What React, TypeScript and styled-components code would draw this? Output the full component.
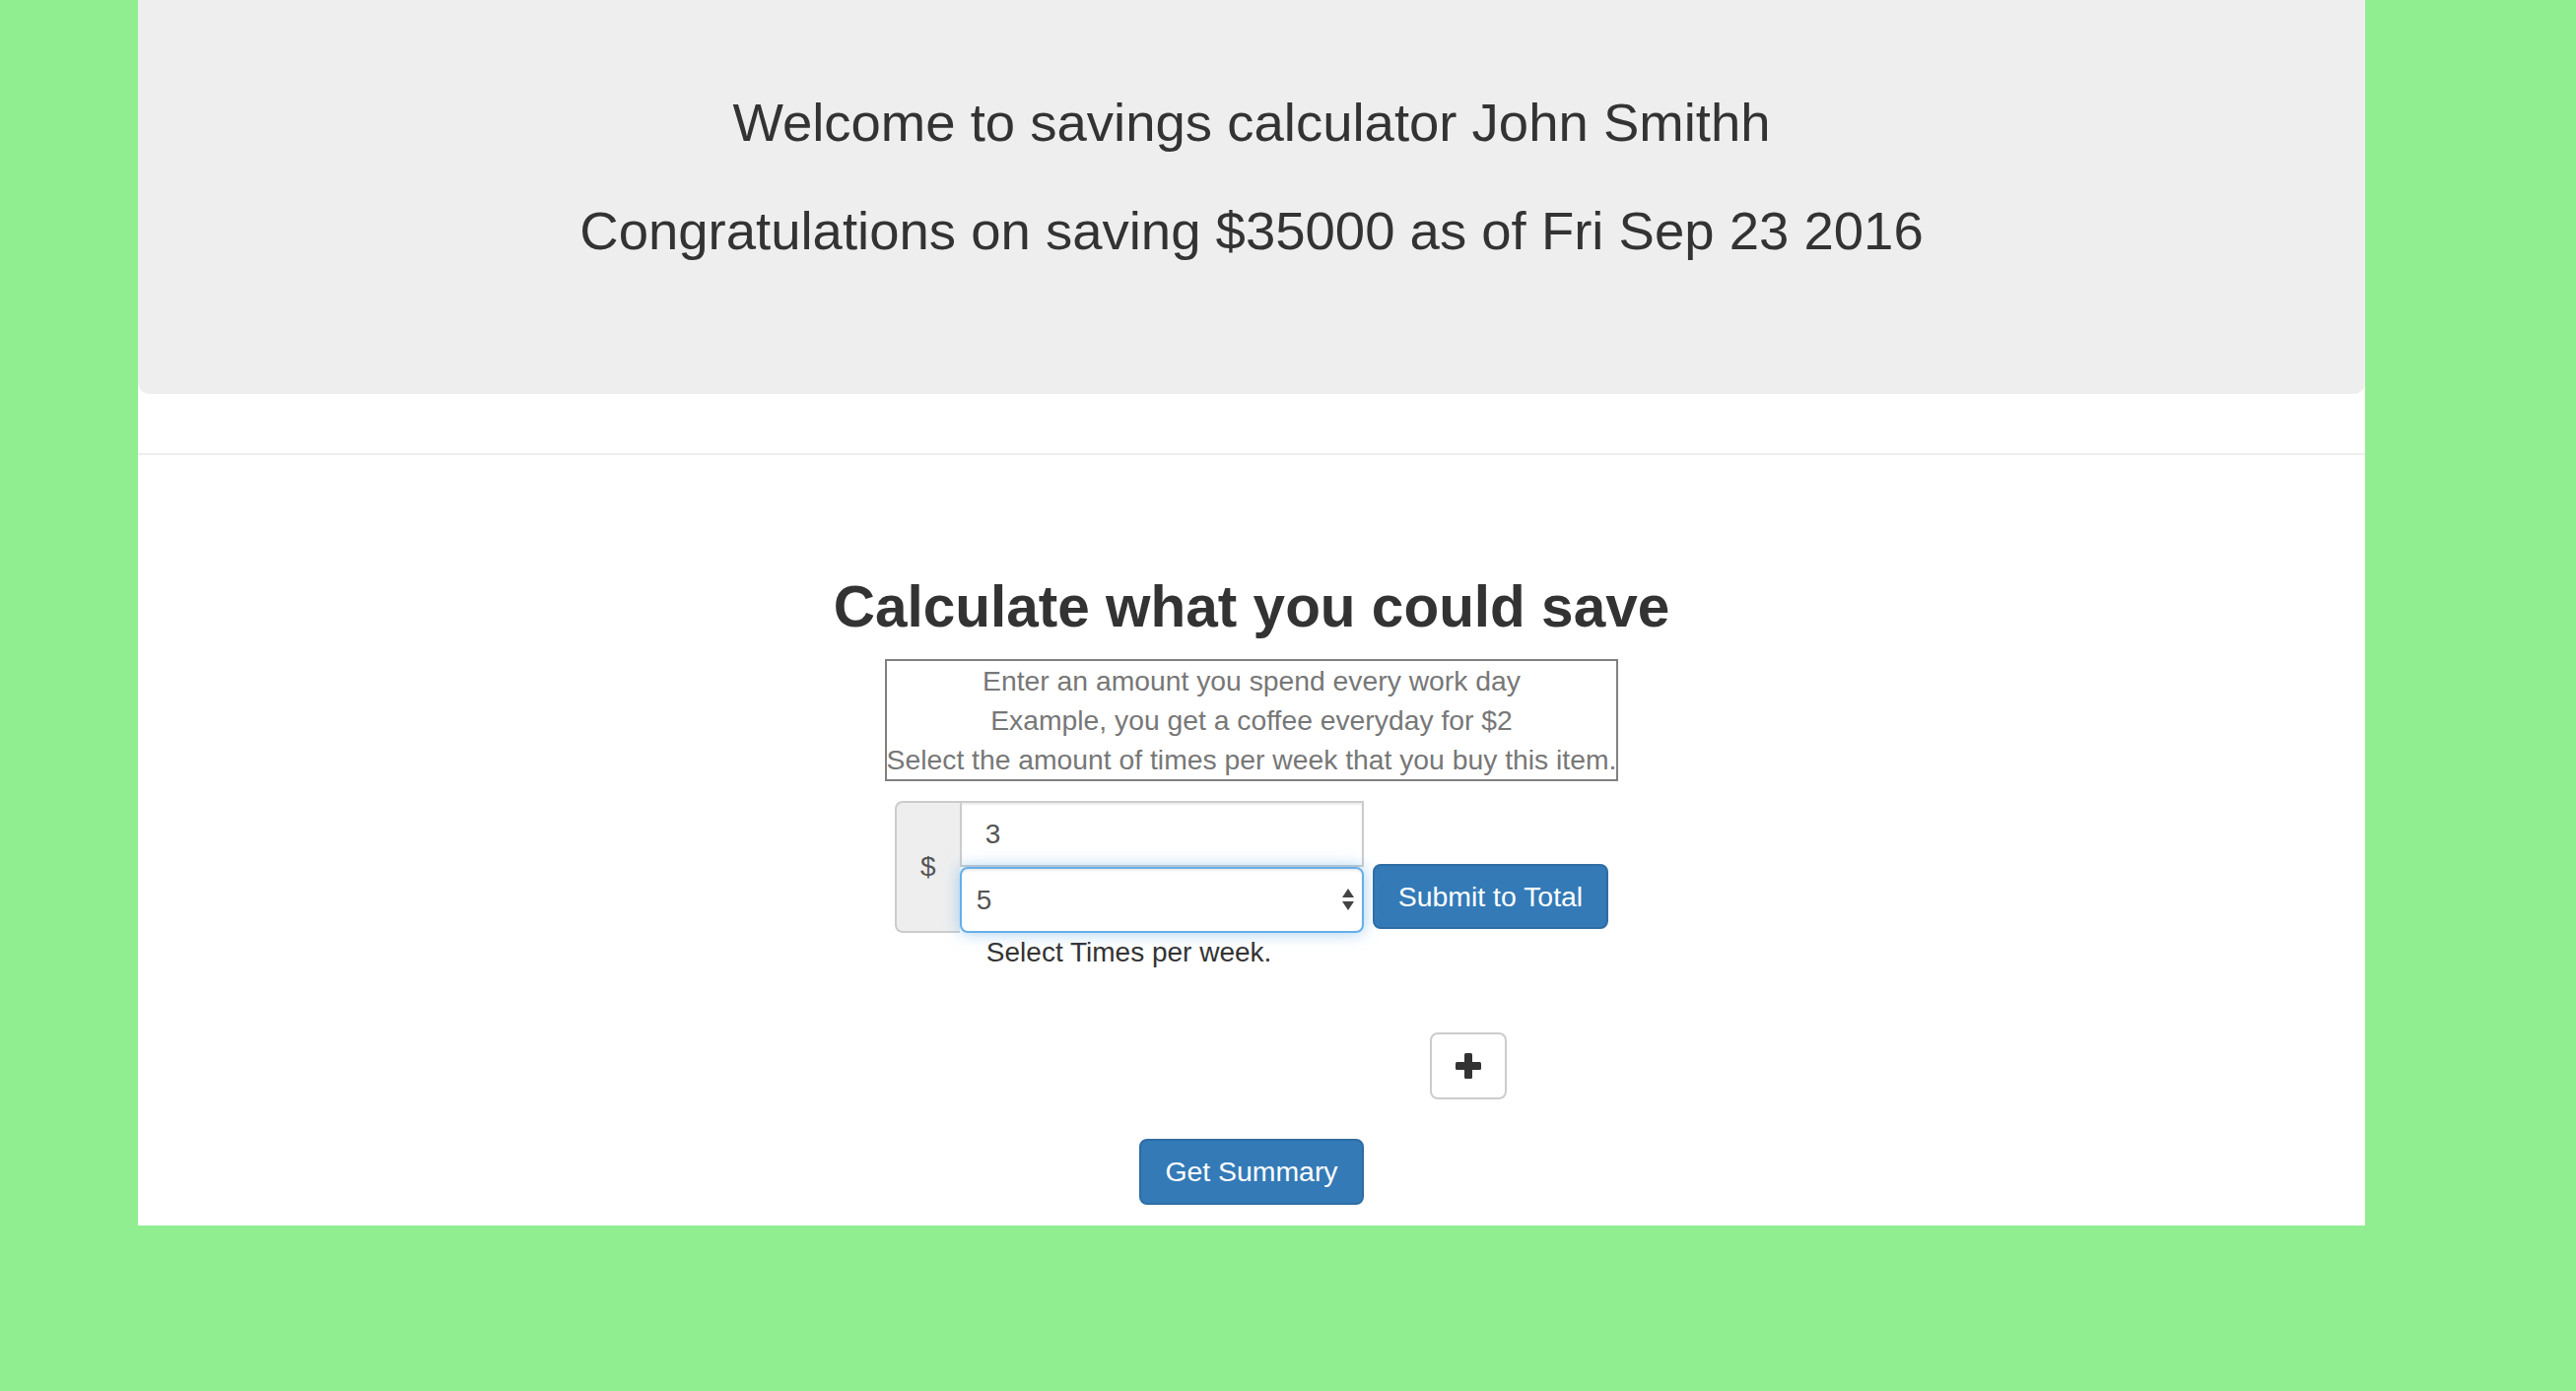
import React from "react";
import styled, { createGlobalStyle } from "styled-components";

const GlobalStyle = createGlobalStyle`
  html, body {
    margin: 0;
    padding: 0;
    background: #90ee90;
  }
  body {
    font-family: "Liberation Sans", Arial, Helvetica, sans-serif;
    color: #333;
  }
  * { box-sizing: border-box; }
`;

const Page = styled.div`
  width: 2260px;
  margin-left: 140px;
  background: #fff;
  padding-bottom: 21px;
`;

const Jumbotron = styled.header`
  height: 400px;
  background: #eee;
  border-radius: 0 0 12px 12px;
  padding-top: 70px;
  text-align: center;
`;

const JumboLine = styled.div`
  font-size: 54.5px;
  line-height: 110px;
  font-weight: 400;
  color: #333;
  white-space: nowrap;
`;

const Divider = styled.hr`
  margin: 60px 0 0;
  border: 0;
  border-top: 2px solid #eee;
  height: 0;
`;

const Main = styled.main`
  display: flex;
  flex-direction: column;
  align-items: center;
  padding-top: 121px;
`;

const Title = styled.h2`
  margin: 0;
  font-size: 58.5px;
  line-height: 66px;
  font-weight: 700;
  color: #333;
  white-space: nowrap;
`;

const InfoBox = styled.div`
  margin-top: 20px;
  border: 2px solid #808080;
  text-align: center;
  color: #777;
  font-size: 28.3px;
  line-height: 40px;
  white-space: nowrap;
`;

const FormArea = styled.div`
  margin-top: 20px;
  display: flex;
  flex-direction: column;
`;

const FormRow = styled.div`
  display: flex;
  align-items: flex-end;
  gap: 9px;
`;

const InputGroup = styled.div`
  display: flex;
  height: 134px;
`;

const Addon = styled.span`
  width: 66px;
  display: flex;
  align-items: center;
  justify-content: center;
  background: #eee;
  border: 2px solid #ccc;
  border-right: 0;
  border-radius: 8px 0 0 8px;
  font-size: 28px;
  color: #555;
`;

const Fields = styled.div`
  width: 410px;
  display: flex;
  flex-direction: column;
`;

const AmountInput = styled.input`
  height: 67px;
  width: 100%;
  margin: 0;
  padding: 0 24px;
  border: 2px solid #ccc;
  border-radius: 0;
  background: #fff;
  box-shadow: inset 0 2px 2px rgba(0, 0, 0, 0.075);
  font-family: "Liberation Sans", Arial, sans-serif;
  font-size: 28px;
  color: #555;
  outline: none;
`;

const SelectWrap = styled.div`
  position: relative;
  height: 67px;
`;

const TimesSelect = styled.select`
  appearance: none;
  -webkit-appearance: none;
  width: 100%;
  height: 100%;
  margin: 0;
  padding: 0 40px 0 15px;
  border: 2px solid #66afe9;
  border-radius: 8px;
  background: #fff;
  box-shadow: inset 0 2px 2px rgba(0, 0, 0, 0.075), 0 0 16px rgba(102, 175, 233, 0.6);
  font-family: "Liberation Sans", Arial, sans-serif;
  font-size: 28px;
  color: #555;
  outline: none;
`;

const SelectArrows = styled.svg`
  position: absolute;
  right: 10px;
  top: 22px;
  pointer-events: none;
`;

const PrimaryButton = styled.button`
  height: 67px;
  padding: 0 24px;
  border: 2px solid #2e6da4;
  border-radius: 8px;
  background: #337ab7;
  color: #fff;
  font-family: "Liberation Sans", Arial, sans-serif;
  font-size: 28.4px;
  line-height: 1;
  white-space: nowrap;
  cursor: pointer;
`;

const SubmitButton = styled(PrimaryButton)`
  height: 66px;
  margin-bottom: 4px;
`;

const HelpText = styled.div`
  padding-left: 93px;
  font-size: 28px;
  line-height: 40px;
  color: #333;
`;

const PlusRow = styled.div`
  margin-top: 61px;
  padding-left: 543px;
`;

const PlusButton = styled.button`
  width: 78px;
  height: 68px;
  display: flex;
  align-items: center;
  justify-content: center;
  padding: 0;
  border: 2px solid #ccc;
  border-radius: 8px;
  background: #fff;
  cursor: pointer;
`;

const SummaryButton = styled(PrimaryButton)`
  margin-top: 40px;
`;

export default function App() {
  return (
    <>
      <GlobalStyle />
      <Page>
        <Jumbotron>
          <JumboLine>Welcome to savings calculator John Smithh</JumboLine>
          <JumboLine>Congratulations on saving $35000 as of Fri Sep 23 2016</JumboLine>
        </Jumbotron>
        <Divider />
        <Main>
          <Title>Calculate what you could save</Title>
          <InfoBox>
            <div>Enter an amount you spend every work day</div>
            <div>Example, you get a coffee everyday for $2</div>
            <div>Select the amount of times per week that you buy this item.</div>
          </InfoBox>
          <FormArea>
            <FormRow>
              <InputGroup>
                <Addon>$</Addon>
                <Fields>
                  <AmountInput type="text" defaultValue="3" />
                  <SelectWrap>
                    <TimesSelect defaultValue="5">
                      {[1, 2, 3, 4, 5, 6, 7].map((n) => (
                        <option key={n} value={String(n)}>
                          {n}
                        </option>
                      ))}
                    </TimesSelect>
                    <SelectArrows width="12" height="22" viewBox="0 0 12 22">
                      <path d="M6 0 L12 9 L0 9 Z" fill="#444" />
                      <path d="M0 13 L12 13 L6 22 Z" fill="#444" />
                    </SelectArrows>
                  </SelectWrap>
                </Fields>
              </InputGroup>
              <SubmitButton type="button">Submit to Total</SubmitButton>
            </FormRow>
            <HelpText>Select Times per week.</HelpText>
            <PlusRow>
              <PlusButton type="button" aria-label="Add">
                <svg width="26" height="26" viewBox="0 0 26 26">
                  <rect x="9" y="0" width="8" height="26" rx="1.5" fill="#333" />
                  <rect x="0" y="9" width="26" height="8" rx="1.5" fill="#333" />
                </svg>
              </PlusButton>
            </PlusRow>
          </FormArea>
          <SummaryButton type="button">Get Summary</SummaryButton>
        </Main>
      </Page>
    </>
  );
}
